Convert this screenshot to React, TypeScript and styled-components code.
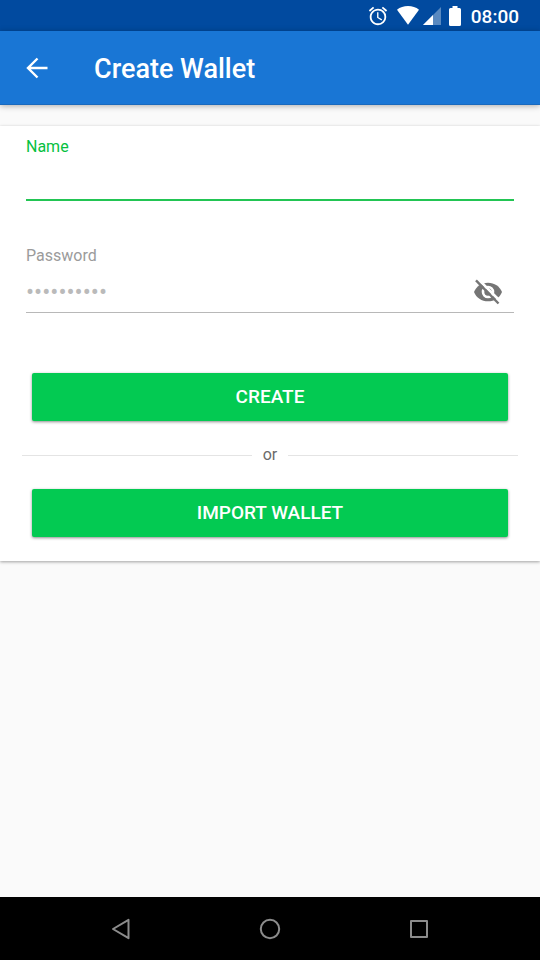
import React, { useState } from "react";
import styled, { createGlobalStyle } from "styled-components";

const GlobalStyle = createGlobalStyle`
  *, *::before, *::after { box-sizing: border-box; }
  body {
    margin: 0;
    background: #fafafa;
    font-family: Roboto, "Noto Sans", sans-serif;
  }
  button, input { font-family: inherit; }
`;

const Screen = styled.div`
  display: flex;
  flex-direction: column;
  min-height: 100vh;
  background: #fafafa;
`;

const StatusBar = styled.div`
  display: flex;
  align-items: center;
  justify-content: flex-end;
  height: 31px;
  padding: 0 21px 0 20px;
  background: #014a9f;
  color: #fff;

  svg { display: block; }
`;

const StatusIcons = styled.div`
  display: flex;
  align-items: center;
  gap: 8px;
`;

const Network = styled.div`
  display: flex;
  align-items: center;
  gap: 4px;
`;

const Clock = styled.time`
  margin-left: 10px;
  padding-top: 2px;
  font-size: 19px;
  line-height: 24px;
  font-weight: 500;
`;

const AppBar = styled.header`
  display: flex;
  align-items: center;
  gap: 44px;
  height: 74px;
  padding: 0 24px;
  background: #1976d5;
  border-bottom: 1px solid #1969bd;
  box-shadow: 0 1px 6px rgba(0, 0, 0, 0.32);
  color: #fff;
`;

const IconButton = styled.button`
  display: grid;
  place-items: center;
  flex: none;
  padding: 0;
  border: 0;
  background: none;
  color: inherit;
  cursor: pointer;

  svg { display: block; }
`;

const Title = styled.h1`
  margin: 0;
  padding-top: 2px;
  font-size: 27px;
  line-height: 32px;
  font-weight: 500;
`;

const Main = styled.main`
  flex: 1;
  padding: 21px 0;
`;

const Card = styled.form`
  display: flex;
  flex-direction: column;
  padding: 11px 26px 24px;
  background: #fff;
  box-shadow: 0 1px 3px rgba(0, 0, 0, 0.36);
`;

const Field = styled.div<{ $active?: boolean }>`
  display: flex;
  flex-direction: column;
  color: ${(p) => (p.$active ? "#06c13f" : "#9b9b9b")};
`;

const Fields = styled.div`
  display: flex;
  flex-direction: column;
  gap: 45px;
`;

const Label = styled.label`
  font-size: 16px;
  line-height: 20px;
`;

const InputRow = styled.div<{ $active?: boolean }>`
  display: flex;
  align-items: center;
  height: ${(p) => (p.$active ? "44px" : "47px")};
  padding: 5px 11px 0 0;
  border-bottom: ${(p) => (p.$active ? "2px solid #22c553" : "1px solid #b8b8b8")};
`;

const TextInput = styled.input`
  flex: 1;
  min-width: 0;
  height: 32px;
  padding: 0;
  border: 0;
  outline: 0;
  background: transparent;
  color: #333;
  font-size: 24px;
  line-height: 32px;

  &::placeholder { color: #bababa; opacity: 1; }
`;

const Actions = styled.div`
  display: flex;
  flex-direction: column;
  gap: 24px;
  margin-top: 60px;
`;

const ActionButton = styled.button`
  height: 48px;
  margin: 0 6px;
  padding: 0;
  border: 0;
  border-radius: 2px;
  background: #03ca52;
  box-shadow: 0 1px 3px rgba(0, 0, 0, 0.45);
  color: #fff;
  font-size: 19px;
  line-height: 24px;
  font-weight: 500;
  text-transform: uppercase;
  cursor: pointer;
`;

const Divider = styled.div`
  display: flex;
  align-items: center;
  gap: 11px;
  margin: 0 -4px;
  color: #6b6b6b;
  font-size: 16px;
  line-height: 20px;

  &::before, &::after {
    content: "";
    flex: 1;
    height: 1px;
    background: #e4e4e4;
  }
`;

const NavBar = styled.nav`
  display: flex;
  align-items: center;
  justify-content: center;
  gap: 125px;
  height: 63px;
  background: #000;
  color: #8c8c8c;
`;

const AlarmIcon = () => (
  <svg width="22" height="22" viewBox="0 0 24 24" fill="currentColor" aria-hidden="true">
    <path d="M22 5.720l-4.600-3.860-1.290 1.530 4.600 3.860L22 5.720zM7.880 3.390L6.600 1.860 2 5.710l1.290 1.530 4.590-3.850zM12.500 8H11v6l4.750 2.850.75-1.230-4-2.370V8zM12 4c-4.970 0-9 4.030-9 9s4.020 9 9 9a9 9 0 000-18zm0 16c-3.870 0-7-3.130-7-7s3.130-7 7-7 7 3.130 7 7-3.130 7-7 7z" />
  </svg>
);

const WifiIcon = () => (
  <svg width="22" height="19" viewBox="0 0 22 19" fill="currentColor" aria-hidden="true">
    <path d="M0 3.700C3 1.200 6.800 0 11 0s8 1.200 11 3.700L11 18.800z" />
  </svg>
);

const SignalIcon = () => (
  <svg width="18" height="18" viewBox="0 0 18 18" fill="currentColor" aria-hidden="true">
    <path d="M18 0v18H0z" opacity=".35" />
    <path d="M10 8v10H0z" />
  </svg>
);

const BatteryIcon = () => (
  <svg width="12" height="20" viewBox="0 0 12 20" fill="currentColor" aria-hidden="true">
    <path d="M3.500 0h5v2h2Q12 2 12 3.500v15q0 1.500-1.500 1.500h-9Q0 20 0 18.500v-15Q0 2 1.500 2h2z" />
  </svg>
);

const BackArrowIcon = () => (
  <svg width="26" height="26" viewBox="0 0 26 26" fill="none" stroke="currentColor" strokeWidth="2.400" aria-hidden="true">
    <path d="M23.500 13H4M13.500 3.500L4 13l9.500 9.500" />
  </svg>
);

const HiddenEyeIcon = () => (
  <svg width="30" height="28" viewBox="0 0 30 28" fill="none" aria-hidden="true">
    <path d="M1 14C3.300 8.200 8.600 4.700 15 4.700S26.700 8.200 29 14C26.700 19.800 21.400 23.300 15 23.300S3.300 19.800 1 14z" fill="#757575" />
    <circle cx="15" cy="14" r="5" stroke="#fff" strokeWidth="2.600" />
    <path d="M4.700.8L27.500 23.600" stroke="#fff" strokeWidth="2.800" />
    <path d="M3 2.300L25.500 25.500" stroke="#757575" strokeWidth="2.400" />
  </svg>
);

const BackIcon = () => (
  <svg width="24" height="24" viewBox="0 0 24 24" fill="none" stroke="currentColor" strokeWidth="2" strokeLinejoin="round" aria-hidden="true">
    <path d="M19.500 2.800v18.400L4 12z" />
  </svg>
);

const HomeIcon = () => (
  <svg width="24" height="24" viewBox="0 0 24 24" fill="none" stroke="currentColor" strokeWidth="2" aria-hidden="true">
    <circle cx="12" cy="12" r="9.200" />
  </svg>
);

const RecentsIcon = () => (
  <svg width="24" height="24" viewBox="0 0 24 24" fill="none" stroke="currentColor" strokeWidth="2" strokeLinejoin="round" aria-hidden="true">
    <path d="M4 4h16v16H4z" />
  </svg>
);

export default function App() {
  const [name, setName] = useState("");
  const [password, setPassword] = useState("");
  const [visible, setVisible] = useState(false);

  return (
    <>
      <GlobalStyle />
      <Screen>
        <StatusBar>
          <StatusIcons>
            <AlarmIcon />
            <Network>
              <WifiIcon />
              <SignalIcon />
            </Network>
            <BatteryIcon />
          </StatusIcons>
          <Clock>08:00</Clock>
        </StatusBar>
        <AppBar>
          <IconButton type="button" aria-label="Back">
            <BackArrowIcon />
          </IconButton>
          <Title>Create Wallet</Title>
        </AppBar>
        <Main>
          <Card onSubmit={(e) => e.preventDefault()}>
            <Fields>
              <Field $active>
                <Label htmlFor="name">Name</Label>
                <InputRow $active>
                  <TextInput id="name" value={name} onChange={(e) => setName(e.target.value)} />
                </InputRow>
              </Field>
              <Field>
                <Label htmlFor="password">Password</Label>
                <InputRow>
                  <TextInput
                    id="password"
                    type={visible ? "text" : "password"}
                    placeholder="••••••••••"
                    value={password}
                    onChange={(e) => setPassword(e.target.value)}
                  />
                  <IconButton
                    type="button"
                    aria-label="Toggle password visibility"
                    aria-pressed={visible}
                    onClick={() => setVisible(!visible)}
                  >
                    <HiddenEyeIcon />
                  </IconButton>
                </InputRow>
              </Field>
            </Fields>
            <Actions>
              <ActionButton type="submit">Create</ActionButton>
              <Divider>or</Divider>
              <ActionButton type="button">Import Wallet</ActionButton>
            </Actions>
          </Card>
        </Main>
        <NavBar aria-label="System navigation">
          <IconButton type="button" aria-label="System back">
            <BackIcon />
          </IconButton>
          <IconButton type="button" aria-label="Home">
            <HomeIcon />
          </IconButton>
          <IconButton type="button" aria-label="Recent apps">
            <RecentsIcon />
          </IconButton>
        </NavBar>
      </Screen>
    </>
  );
}
